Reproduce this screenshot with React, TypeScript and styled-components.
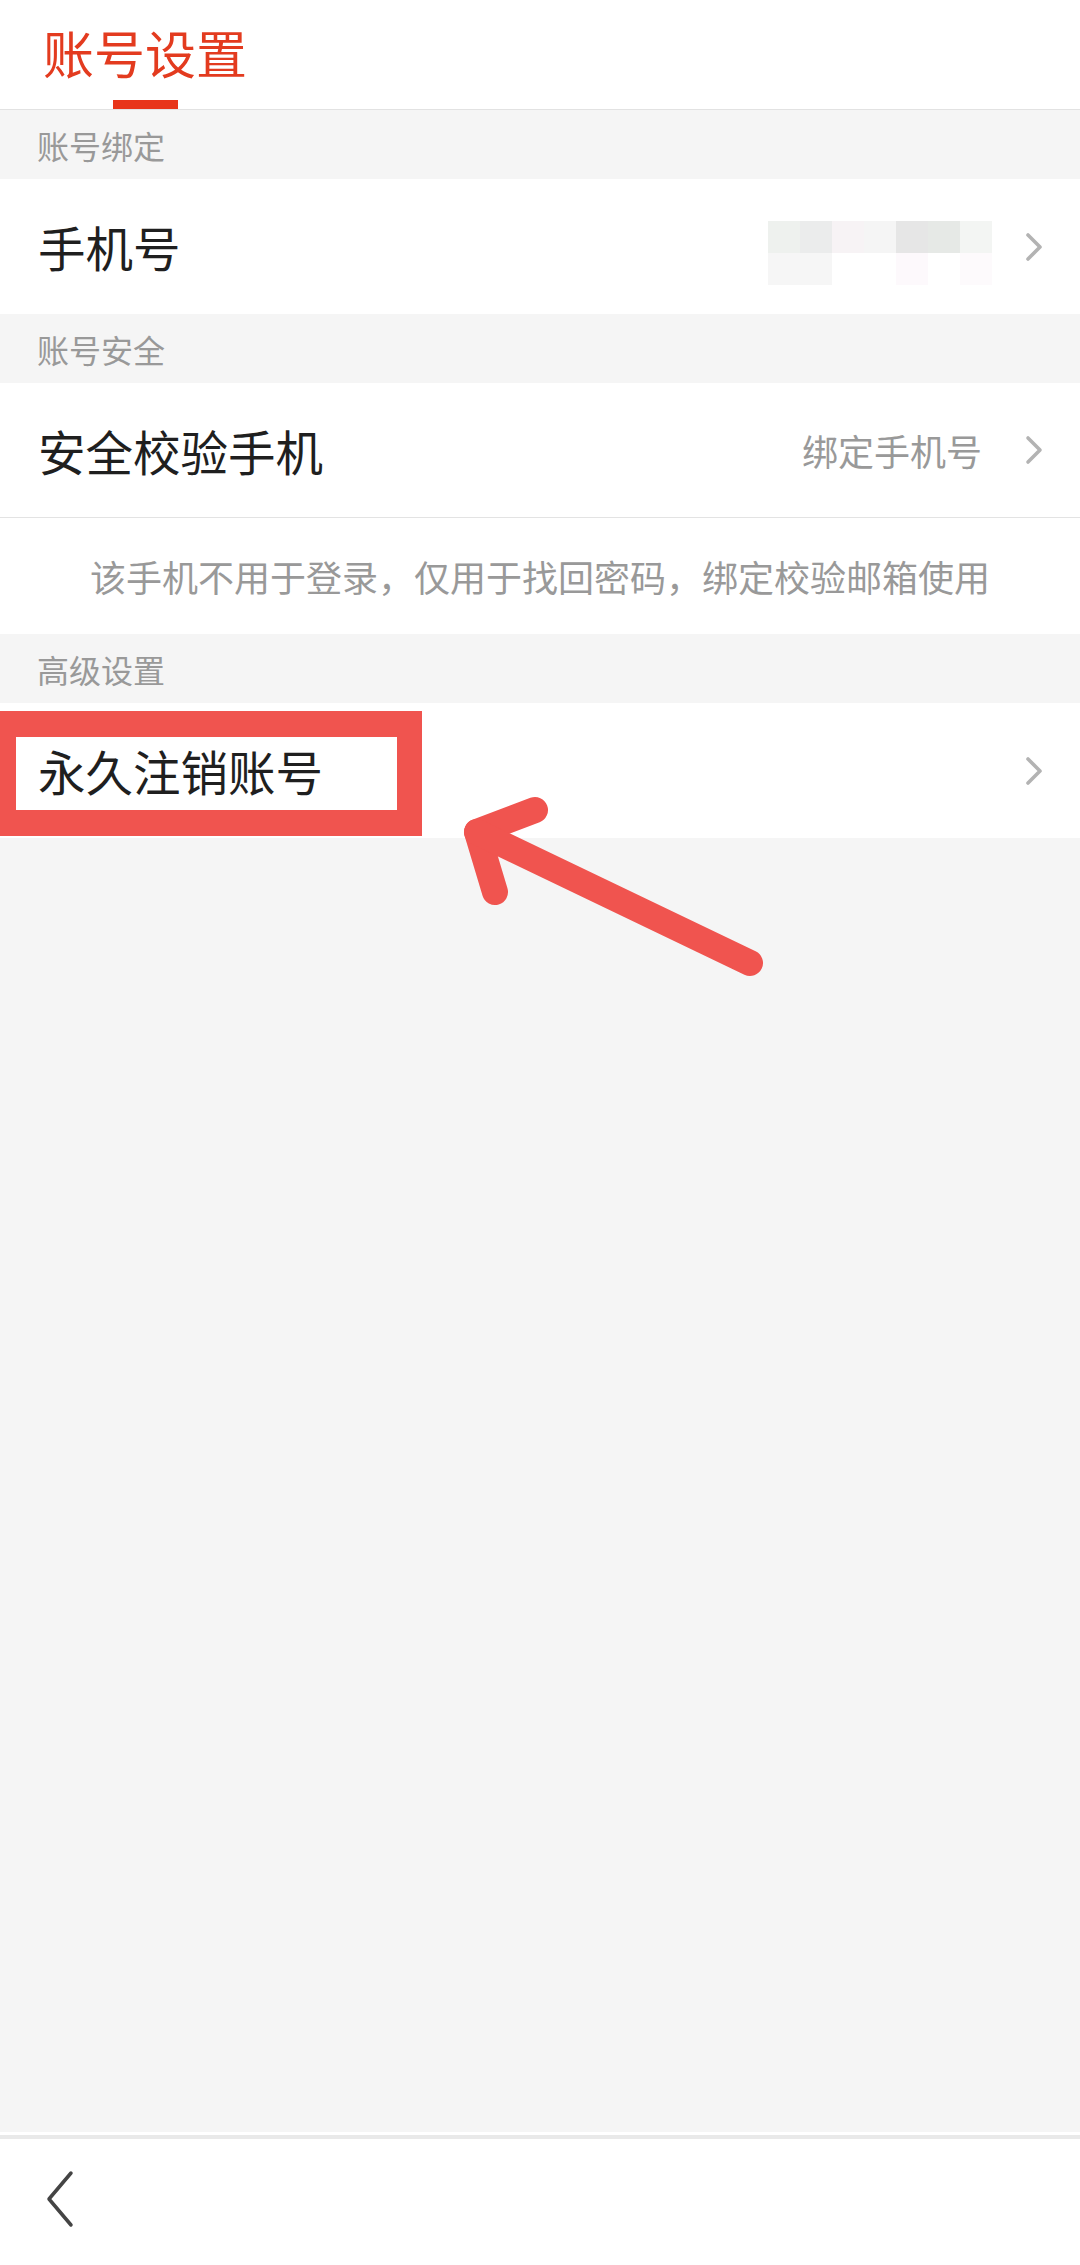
import styled, { createGlobalStyle } from "styled-components";

const GlobalStyle = createGlobalStyle`
  html, body {
    margin: 0;
    padding: 0;
    background: #f5f5f5;
  }
  body {
    font-family: "Noto Sans CJK SC", "Noto Sans", sans-serif;
  }
  * {
    box-sizing: border-box;
  }
`;

const mosaic = [
    ["#eef1ee", "#ebecec", "#f7f3f5", "#f5f5f5", "#e6e6e6", "#e6e9e6", "#f3f5f3"],
    ["#f6f6f6", "#f6f6f6", "#ffffff", "#ffffff", "#fdf9fc", "#ffffff", "#fdfafc"],
];

export default function App() {
    return <Page>
        <GlobalStyle/>
        <Header>
            <Tab>
                <TabTitle>账号设置</TabTitle>
                <TabLine/>
            </Tab>
        </Header>

        <SectionLabel>账号绑定</SectionLabel>
        <Row>
            <RowTitle>手机号</RowTitle>
            <RowRight>
                <Mosaic>
                    {mosaic.flat().map((c, i) => <Cell key={i} $color={c}/>)}
                </Mosaic>
                <Chevron/>
            </RowRight>
        </Row>

        <SectionLabel>账号安全</SectionLabel>
        <Row $divider>
            <RowTitle>安全校验手机</RowTitle>
            <RowRight>
                <RowValue>绑定手机号</RowValue>
                <Chevron/>
            </RowRight>
        </Row>
        <Note>该手机不用于登录，仅用于找回密码，绑定校验邮箱使用</Note>

        <SectionLabel>高级设置</SectionLabel>
        <Row>
            <RowTitle>永久注销账号</RowTitle>
            <RowRight>
                <Chevron/>
            </RowRight>
            {/* red annotation drawn over the screenshot */}
            <MarkBox/>
            <Arrow width="340" height="200" viewBox="0 0 340 200">
                <g fill="none" stroke="#f0544f" strokeWidth="26" strokeLinecap="round" strokeLinejoin="round">
                    <polyline points="95,20 37,42 55,102"/>
                    <line x1="37" y1="42" x2="310" y2="173"/>
                </g>
            </Arrow>
        </Row>

        <Filler/>

        <Footer>
            <BackButton>
                <svg width="30" height="58" viewBox="0 0 30 58">
                    <polyline points="26,3 4,29 26,55" fill="none" stroke="#444" strokeWidth="3.5"
                              strokeLinecap="round" strokeLinejoin="round"/>
                </svg>
            </BackButton>
        </Footer>
    </Page>
}

function Chevron() {
    return <ChevronIcon width="18" height="30" viewBox="0 0 18 30">
        <polyline points="3,3 15,15 3,27" fill="none" stroke="#b3b3b3" strokeWidth="3.6"
                  strokeLinecap="round" strokeLinejoin="round"/>
    </ChevronIcon>
}

const Page = styled.div`
  display: flex;
  flex-direction: column;
  min-height: 2265px;
  background: #f5f5f5;
`

const Header = styled.div`
  display: flex;
  height: 110px;
  padding-left: 43px;
  background: #ffffff;
  border-bottom: 1px solid #e2e2e2;
`

const Tab = styled.div`
  display: flex;
  flex-direction: column;
  align-items: center;
  justify-content: space-between;
  padding-top: 24px;
`

const TabTitle = styled.div`
  font-size: 51px;
  line-height: 56px;
  color: #e33b1f;
`

const TabLine = styled.div`
  width: 65px;
  height: 9px;
  background: #e8351a;
`

const SectionLabel = styled.div`
  display: flex;
  align-items: center;
  height: 69px;
  padding-left: 37px;
  font-size: 32px;
  color: #999999;
`

const Row = styled.div<{ $divider?: boolean }>`
  position: relative;
  display: flex;
  align-items: center;
  justify-content: space-between;
  height: 135px;
  padding: 0 37px 0 38px;
  background: #ffffff;
  border-bottom: ${({$divider}) => $divider ? "1px solid #e3e3e3" : "none"};
`

const RowTitle = styled.div`
  font-size: 47.5px;
  color: #1f1f1f;
`

const RowRight = styled.div`
  display: flex;
  align-items: center;
`

const RowValue = styled.div`
  font-size: 36px;
  color: #999999;
  margin-right: 43px;
`

const ChevronIcon = styled.svg`
  display: block;
`

const Mosaic = styled.div`
  display: grid;
  grid-template-columns: repeat(7, 32px);
  grid-auto-rows: 32px;
  margin-top: 12px;
  margin-right: 33px;
`

const Cell = styled.div<{ $color: string }>`
  background: ${({$color}) => $color};
`

const Note = styled.div`
  display: flex;
  align-items: center;
  justify-content: center;
  height: 116px;
  background: #ffffff;
  font-size: 36px;
  color: #999999;
`

const MarkBox = styled.div`
  position: absolute;
  left: 0;
  top: 8px;
  width: 422px;
  height: 125px;
  border-style: solid;
  border-color: #f0544f;
  border-width: 26px 25px 26px 16px;
`

const Arrow = styled.svg`
  position: absolute;
  left: 440px;
  top: 87px;
  overflow: visible;
`

const Filler = styled.div`
  flex: 1;
`

const Footer = styled.div`
  display: flex;
  align-items: center;
  height: 133px;
  padding-left: 45px;
  background: #ffffff;
  border-top: 3px solid #ffffff;
  box-shadow: inset 0 4px 0 #e9e9e9;
`

const BackButton = styled.div`
  display: flex;
  margin-top: -2px;
`
